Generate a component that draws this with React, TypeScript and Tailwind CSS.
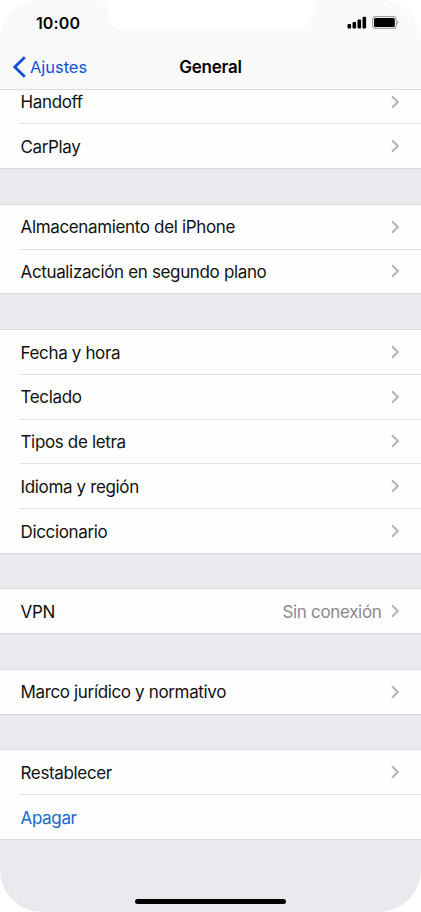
import clsx from "clsx";

type Item = {
  label: string;
  value?: string;
  action?: boolean;
};

const GROUPS: Item[][] = [
  [{ label: "Handoff" }, { label: "CarPlay" }],
  [
    { label: "Almacenamiento del iPhone" },
    { label: "Actualización en segundo plano" },
  ],
  [
    { label: "Fecha y hora" },
    { label: "Teclado" },
    { label: "Tipos de letra" },
    { label: "Idioma y región" },
    { label: "Diccionario" },
  ],
  [{ label: "VPN", value: "Sin conexión" }],
  [{ label: "Marco jurídico y normativo" }],
  [{ label: "Restablecer" }, { label: "Apagar", action: true }],
];

function Chevron() {
  return (
    <svg width="9" height="14" viewBox="0 0 9 14" fill="none">
      <path d="M1 1.300L6.800 7L1 12.700" stroke="#b5b5b7" strokeWidth="2.100" />
    </svg>
  );
}

function Notch() {
  return (
    <svg
      className="absolute left-[99px] top-0"
      width="223"
      height="30"
      viewBox="0 0 223 30"
    >
      <path
        d="M0 0C6 0 8.500 2.500 8.500 8C8.500 22 15 30 30 30H193C208 30 214.500 22 214.500 8C214.500 2.500 217 0 223 0Z"
        fill="#ffffff"
      />
    </svg>
  );
}

function StatusBar() {
  return (
    <div className="flex h-[45px] items-center justify-between pl-9 pr-[22px]">
      <span className="text-[16px] font-semibold tracking-[0.1px]">10:00</span>
      <div className="flex items-center gap-[5px]">
        <svg width="20" height="13" viewBox="0 0 20 13" fill="#000000">
          <rect x="0.500" y="8" width="3.600" height="4.500" rx="1" />
          <rect x="5.500" y="6" width="3.600" height="6.500" rx="1" />
          <rect x="10.500" y="3.500" width="3.600" height="9" rx="1" />
          <rect x="15.500" y="0.800" width="3.600" height="11.700" rx="1" />
        </svg>
        <svg width="27" height="13" viewBox="0 0 27 13">
          <rect
            x="0.600"
            y="0.600"
            width="23.600"
            height="11.800"
            rx="3"
            fill="none"
            stroke="#a3a3a3"
            strokeWidth="1.200"
          />
          <rect x="2" y="2" width="20.800" height="9" rx="1.600" />
          <path d="M25.300 4.500C26.700 5 26.700 8 25.300 8.500Z" fill="#8c8c8c" />
        </svg>
      </div>
    </div>
  );
}

function NavBar() {
  return (
    <div className="grid h-11 grid-cols-3 items-center">
      <button className="flex items-center gap-[3px] pl-3 text-[#1150de]">
        <svg width="15" height="22" viewBox="0 0 15 22" fill="none">
          <path d="M12.800 1.300L2.800 11L12.800 20.700" stroke="currentColor" strokeWidth="2.800" />
        </svg>
        <span className="text-[16.5px] tracking-[-0.05px]">Ajustes</span>
      </button>
      <h1 className="pt-0.5 text-center text-[17px] font-semibold tracking-[-0.2px]">
        General
      </h1>
    </div>
  );
}

function Row({ item, last }: { item: Item; last: boolean }) {
  return (
    <li className="h-[44.75px] pl-5">
      <div
        className={clsx(
          "flex h-full items-center border-b pl-[0.5px] pr-[21.5px]",
          last ? "border-transparent" : "border-[#e2e2e4]",
        )}
      >
        <span
          className={clsx(
            "flex-1 pt-[3px] text-[17px] tracking-[-0.35px]",
            item.action ? "text-[#1269cf]" : "text-[#111111]",
          )}
        >
          {item.label}
        </span>
        {item.value && (
          <span className="mr-[9px] pt-[3px] text-[17px] tracking-[-0.33px] text-[#8a8a8c]">
            {item.value}
          </span>
        )}
        {!item.action && <Chevron />}
      </div>
    </li>
  );
}

export default function App() {
  return (
    <div className="h-[912px] w-[421px] overflow-hidden bg-white font-['Inter',sans-serif] text-black">
      <div className="relative flex h-full flex-col overflow-hidden rounded-[42px] bg-[#eae9ee]">
        <header className="relative z-10 h-[90px] border-b border-[#dcdcde] bg-[#fafafa]">
          <Notch />
          <StatusBar />
          <NavBar />
        </header>

        <main className="-mt-[10.350px] flex flex-col gap-[35.680px]">
          {GROUPS.map((group) => (
            <ul
              key={group[0].label}
              className="bg-[#fefefe] shadow-[inset_0_-1px_0_#dad9de,0_-1px_0_#dddce1]"
            >
              {group.map((item, i) => (
                <Row
                  key={item.label}
                  item={item}
                  last={i === group.length - 1}
                />
              ))}
            </ul>
          ))}
        </main>

        <div className="absolute bottom-[8px] left-[135px] h-[5px] w-[151px] rounded-full bg-black" />
      </div>
    </div>
  );
}
